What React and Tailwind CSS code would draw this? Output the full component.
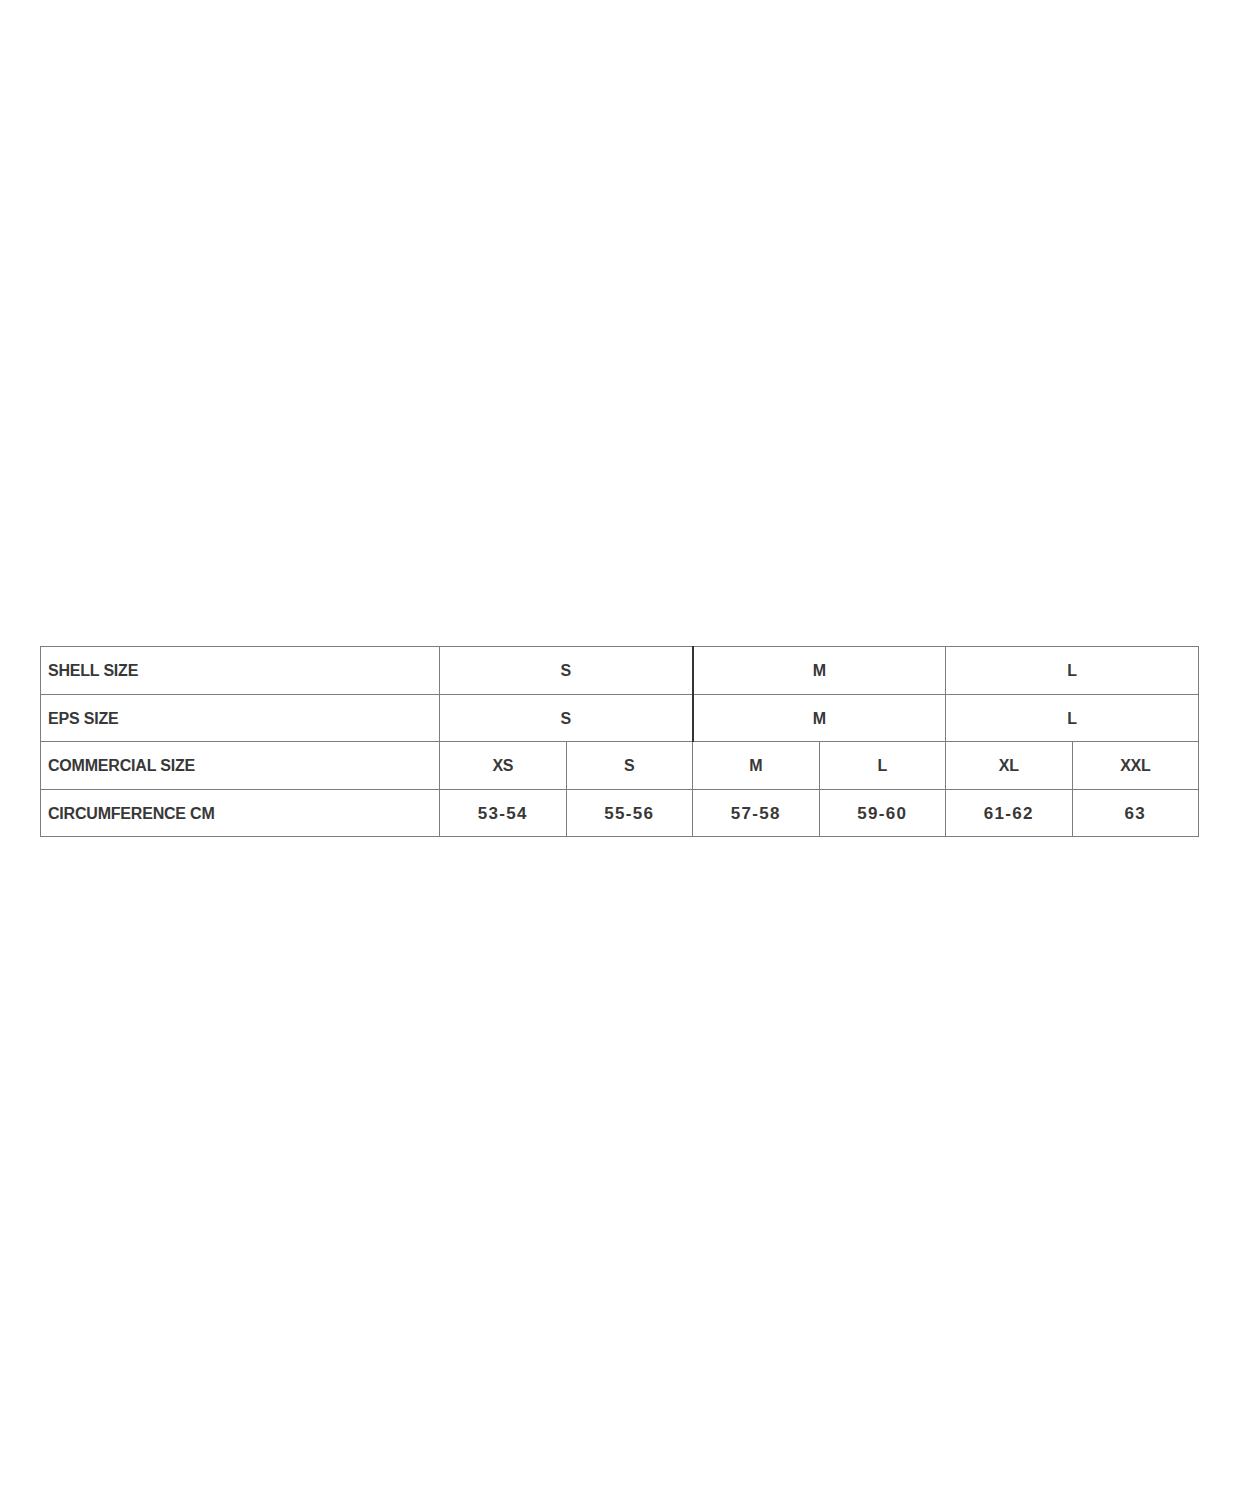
import React from 'react'

const rows = [
  { label: 'SHELL SIZE', cells: [['S', 2], ['M', 2], ['L', 2]] },
  { label: 'EPS SIZE', cells: [['S', 2], ['M', 2], ['L', 2]] },
  { label: 'COMMERCIAL SIZE', cells: [['XS', 1], ['S', 1], ['M', 1], ['L', 1], ['XL', 1], ['XXL', 1]] },
  { label: 'CIRCUMFERENCE CM', cells: [['53-54', 1], ['55-56', 1], ['57-58', 1], ['59-60', 1], ['61-62', 1], ['63', 1]], digits: true },
]

export default function App() {
  return (
    <div className="min-h-[1500px] w-[1250px] bg-white pt-[646px] pl-[40px]">
      <table
        className="w-[1159px] table-fixed border-collapse text-[#383838]"
        style={{ fontFamily: '"Liberation Sans", Arial, sans-serif' }}
      >
        <colgroup>
          <col className="w-[399px]" />
          <col />
          <col />
          <col />
          <col />
          <col />
          <col />
        </colgroup>
        <tbody>
          {rows.map((row) => (
            <tr key={row.label} className="h-[47.5px]">
              <td className="border border-[#7d7d7d] pt-[2px] pl-[7px] text-[16px] font-bold tracking-[-0.2px]">
                {row.label}
              </td>
              {row.cells.map(([val, span], i) => (
                <td
                  key={i}
                  colSpan={span}
                  className={`border border-[#7d7d7d] pt-[2px] text-center font-bold ${
                    row.digits ? 'text-[17px] tracking-[1.3px]' : 'text-[16px] tracking-[-0.3px]'
                  } ${span === 2 && i === 1 ? 'border-l-2 border-l-[#333]' : ''}`}
                >
                  {val}
                </td>
              ))}
            </tr>
          ))}
        </tbody>
      </table>
    </div>
  )
}
